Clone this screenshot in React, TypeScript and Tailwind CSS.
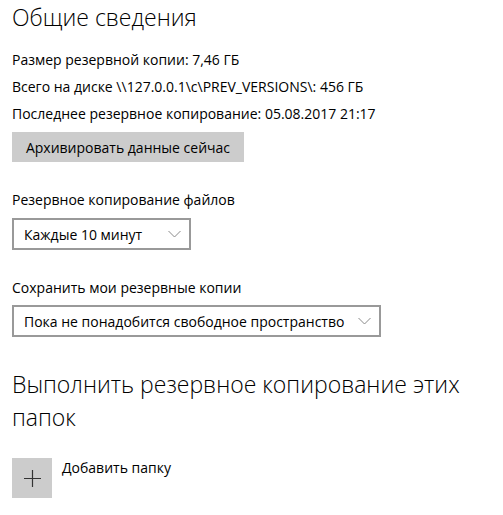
const font = { fontFamily: "'Open Sans', 'Noto Sans', sans-serif" };

const Chevron = () => (
  <svg width="13" height="8" viewBox="0 0 13 8" fill="none" className="text-[#8a8a8a]">
    <polyline points="0.5,1 6.5,7 12.5,1" stroke="currentColor" strokeWidth="1" />
  </svg>
);

const Dropdown = ({ value, width }: { value: string; width: string }) => (
  <div className={`flex h-[32px] items-center justify-between border-2 border-[#999999] bg-white pl-[10px] pr-[8px] ${width}`}>
    <span className="text-[14px] text-black">{value}</span>
    <Chevron />
  </div>
);

const App = () => {
  return (
    <div className="min-h-[515px] w-[503px] bg-white px-[12px] text-black" style={font}>
      <h1 className="pt-[2px] text-[23px] font-light leading-[30px]">Общие сведения</h1>

      <div className="mt-[18px] flex flex-col gap-[7px] text-[14px] leading-[20px]">
        <p>Размер резервной копии: 7,46 ГБ</p>
        <p>Всего на диске \\127.0.0.1\c\PREV_VERSIONS\: 456 ГБ</p>
        <p>Последнее резервное копирование: 05.08.2017 21:17</p>
      </div>

      <button className="mt-[8px] h-[30px] w-[232px] bg-[#cccccc] text-[14px] text-black">
        Архивировать данные сейчас
      </button>

      <p className="mt-[28px] text-[14px] leading-[20px]">Резервное копирование файлов</p>
      <div className="mt-[8px]">
        <Dropdown value="Каждые 10 минут" width="w-[179px]" />
      </div>

      <p className="mt-[28px] text-[14px] leading-[20px]">Сохранить мои резервные копии</p>
      <div className="mt-[7px]">
        <Dropdown value="Пока не понадобится свободное пространство" width="w-[369px]" />
      </div>

      <h2 className="mt-[31px] text-[23px] font-light leading-[33px]">
        Выполнить резервное копирование этих папок
      </h2>

      <div className="mt-[24px] flex items-start gap-[10px]">
        <div className="flex h-[40px] w-[40px] items-center justify-center bg-[#cccccc]">
          <svg width="17" height="17" viewBox="0 0 17 17" className="text-[#333333]">
            <path d="M8.5 0v17M0 8.5h17" stroke="currentColor" strokeWidth="1.2" />
          </svg>
        </div>
        <span className="text-[14px] leading-[20px]">Добавить папку</span>
      </div>
    </div>
  );
};

export default App;
